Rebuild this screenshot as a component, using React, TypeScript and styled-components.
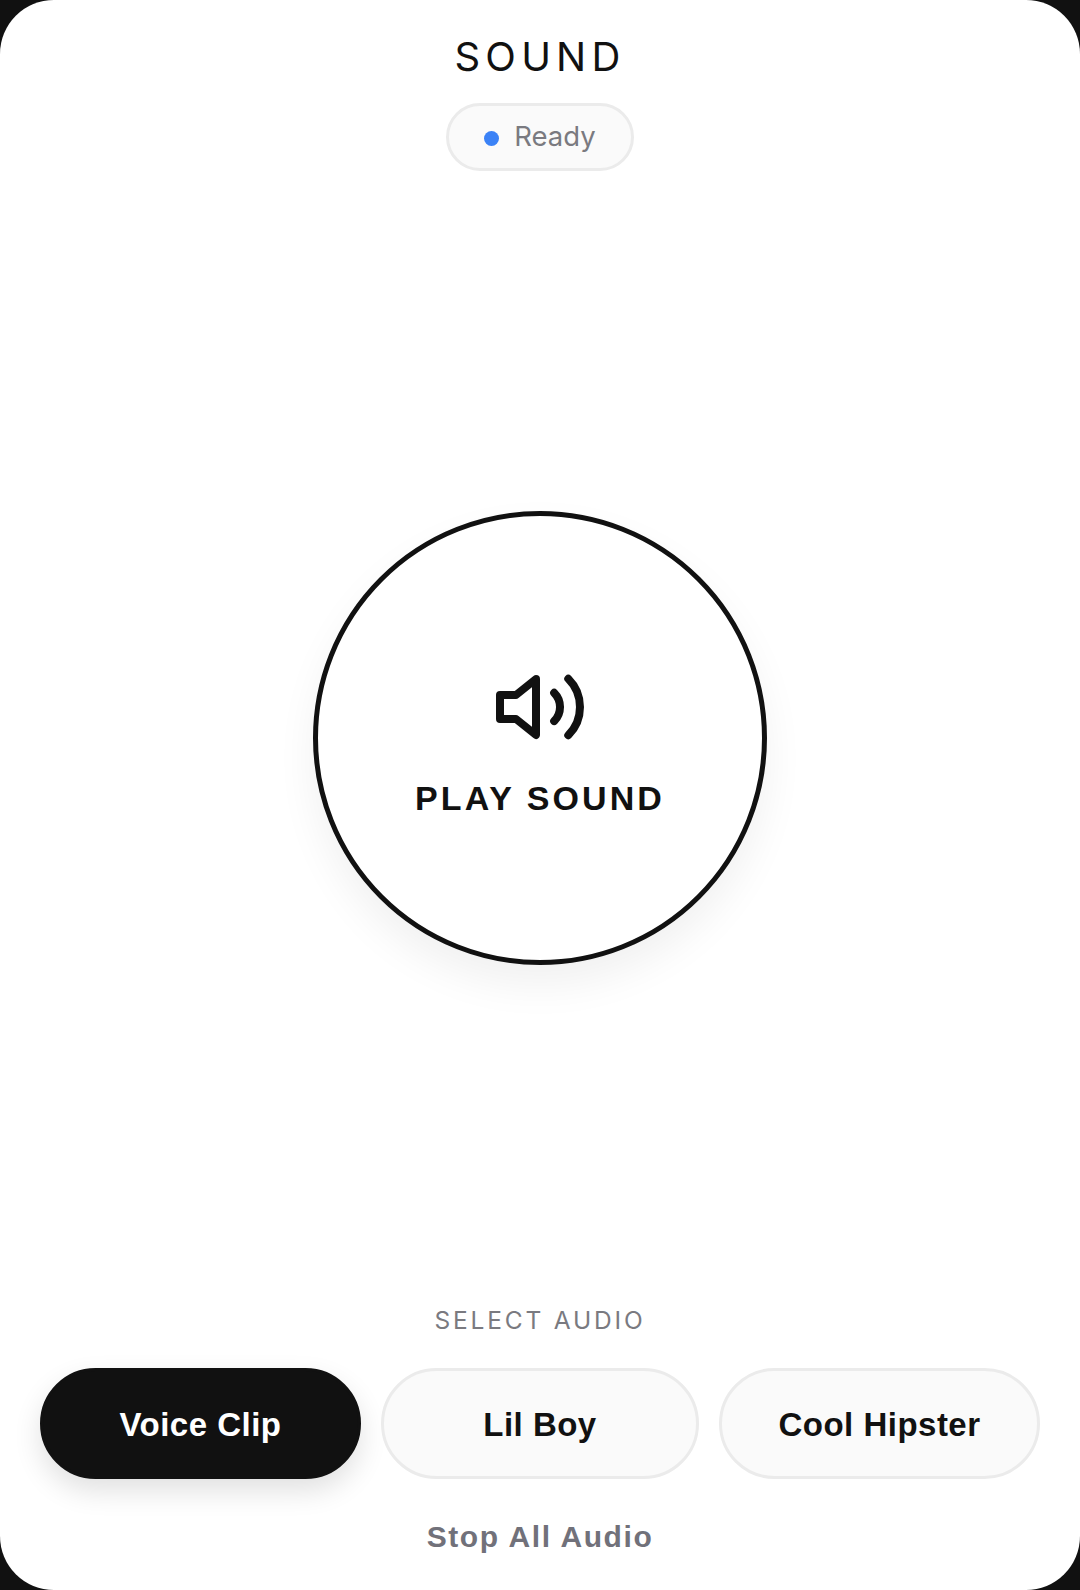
import React from "react";
import styled, { createGlobalStyle } from "styled-components";

const GlobalStyle = createGlobalStyle`
  html, body {
    margin: 0;
    padding: 0;
    background: #111111;
  }
  * {
    box-sizing: border-box;
  }
`;

const tracks = ["Voice Clip", "Lil Boy", "Cool Hipster"];

const App: React.FC = () => {
  return (
    <>
      <GlobalStyle />
      <Panel>
        <Header>
          <Title>SOUND</Title>
          <StatusPill>
            <StatusDot />
            <StatusText>Ready</StatusText>
          </StatusPill>
        </Header>
        <Stage>
          <PlayButton>
            <svg
              width="96"
              height="96"
              viewBox="0 0 24 24"
              fill="none"
              stroke="#111111"
              strokeWidth="2"
              strokeLinecap="round"
              strokeLinejoin="round"
            >
              <polygon points="11 5 6 9 2 9 2 15 6 15 11 19 11 5" />
              <path d="M15.54 8.46a5 5 0 0 1 0 7.07" />
              <path d="M19.07 4.93a10 10 0 0 1 0 14.14" />
            </svg>
            <PlayLabel>PLAY SOUND</PlayLabel>
          </PlayButton>
        </Stage>
        <Footer>
          <SelectLabel>SELECT AUDIO</SelectLabel>
          <TrackRow>
            {tracks.map((track, i) => (
              <TrackButton key={track} $active={i === 0}>
                {track}
              </TrackButton>
            ))}
          </TrackRow>
          <StopButton>Stop All Audio</StopButton>
        </Footer>
      </Panel>
    </>
  );
};

const Panel = styled.div`
  width: 1080px;
  height: 1590px;
  background: #ffffff;
  border-radius: 54px;
  display: flex;
  flex-direction: column;
  overflow: hidden;
`;

const Header = styled.header`
  display: flex;
  flex-direction: column;
  align-items: center;
  padding-top: 32px;
  gap: 21px;
`;

const Title = styled.h1`
  margin: 0;
  font-family: Inter, "Liberation Sans", sans-serif;
  font-size: 40px;
  line-height: 50px;
  font-weight: 400;
  letter-spacing: 0.13em;
  color: #111111;
`;

const StatusPill = styled.div`
  display: flex;
  align-items: center;
  gap: 15px;
  height: 68px;
  padding: 0 35px;
  border: 3px solid #ebebeb;
  border-radius: 34px;
  background: #fafafa;
`;

const StatusDot = styled.span`
  width: 15px;
  height: 15px;
  margin-top: 2px;
  border-radius: 50%;
  background: #3b82f6;
`;

const StatusText = styled.span`
  margin-bottom: 2px;
  font-family: Inter, "Liberation Sans", sans-serif;
  font-size: 27.5px;
  font-weight: 400;
  color: #7a7a80;
`;

const Stage = styled.main`
  flex: 1;
  display: flex;
  align-items: center;
  justify-content: center;
`;

const PlayButton = styled.button`
  width: 454px;
  height: 454px;
  border: 5px solid #111111;
  border-radius: 50%;
  background: #ffffff;
  box-shadow: 0 20px 40px rgba(0, 0, 0, 0.06);
  display: flex;
  flex-direction: column;
  align-items: center;
  justify-content: center;
  gap: 23px;
  padding: 0;
`;

const PlayLabel = styled.span`
  font-family: "Liberation Sans", Arial, sans-serif;
  font-size: 34px;
  line-height: 40px;
  font-weight: 700;
  letter-spacing: 0.09em;
  color: #111111;
`;

const Footer = styled.footer`
  display: flex;
  flex-direction: column;
  align-items: center;
  padding: 0 40px 35px;
`;

const SelectLabel = styled.div`
  font-family: Inter, "Liberation Sans", sans-serif;
  font-size: 24.5px;
  line-height: 30px;
  font-weight: 400;
  letter-spacing: 0.115em;
  color: #7a7a80;
  margin-bottom: 33px;
`;

const TrackRow = styled.div`
  width: 100%;
  display: grid;
  grid-template-columns: 321px 318px 321px;
  column-gap: 20px;
`;

const TrackButton = styled.button<{ $active: boolean }>`
  height: 111px;
  border-radius: 56px;
  border: 3px solid ${({ $active }) => ($active ? "#111111" : "#ebebeb")};
  background: ${({ $active }) => ($active ? "#111111" : "#fafafa")};
  color: ${({ $active }) => ($active ? "#ffffff" : "#111111")};
  box-shadow: ${({ $active }) =>
    $active ? "0 12px 28px rgba(0, 0, 0, 0.12)" : "none"};
  font-family: "Liberation Sans", Arial, sans-serif;
  font-size: 33px;
  font-weight: 700;
  letter-spacing: 0.015em;
  padding: 2px 0 0;
`;

const StopButton = styled.button`
  margin-top: 40px;
  border: none;
  background: none;
  padding: 0;
  font-family: "Liberation Sans", Arial, sans-serif;
  font-size: 30px;
  line-height: 36px;
  font-weight: 700;
  letter-spacing: 0.053em;
  color: #71717a;
`;

export default App;
